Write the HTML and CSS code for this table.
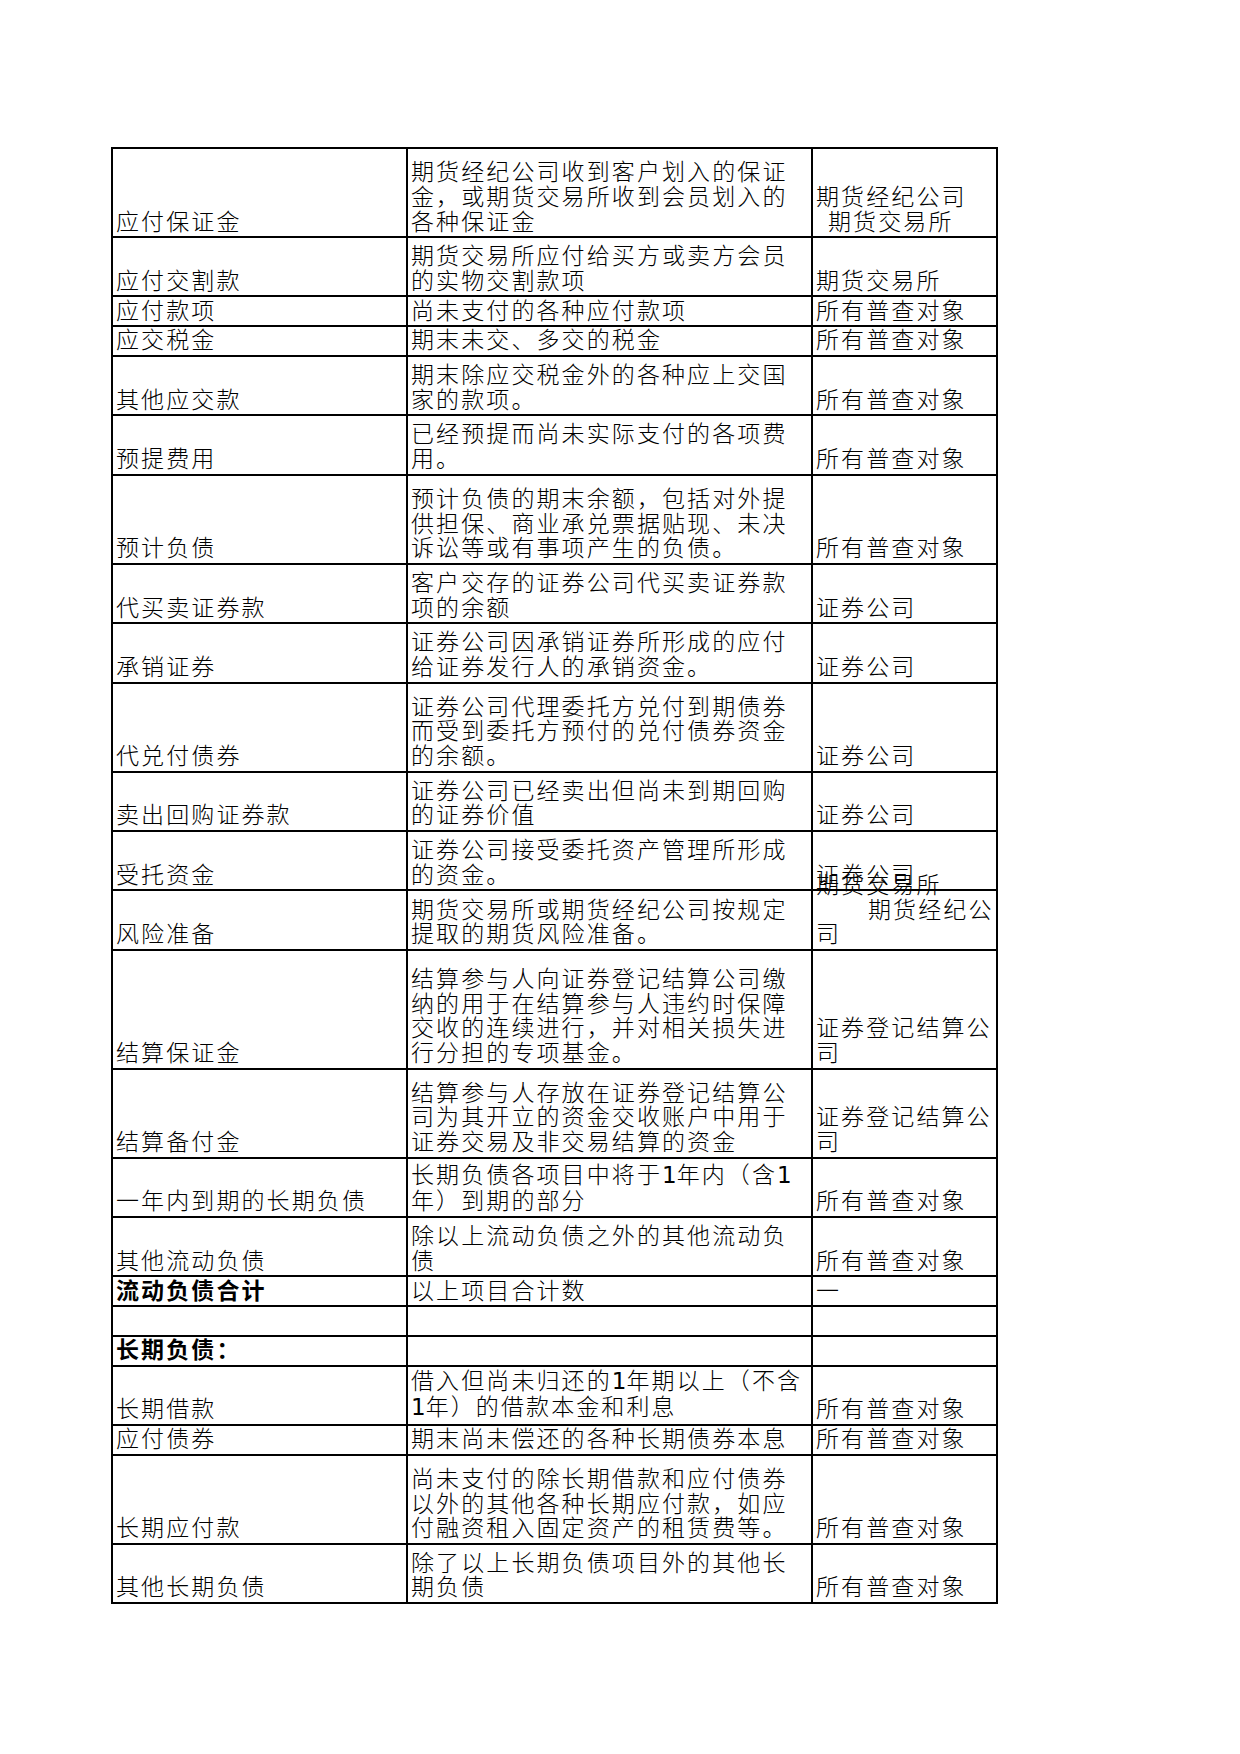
FILE: index.html
```html
<!DOCTYPE html>
<html lang="zh-CN">
<head>
<meta charset="utf-8">
<title>负债项目说明</title>
<link rel="stylesheet" href="styles.css">
</head>
<body>
<div class="sheet">
  <div class="row h3"><div class="c"><div class="t">应付保证金</div></div><div class="c"><div class="t">期货经纪公司收到客户划入的保证<br>金，或期货交易所收到会员划入的<br>各种保证金</div></div><div class="c"><div class="t">期货经纪公司<br><span class="i1">期货交易所</span></div></div></div>
  <div class="row h2"><div class="c"><div class="t">应付交割款</div></div><div class="c"><div class="t">期货交易所应付给买方或卖方会员<br>的实物交割款项</div></div><div class="c"><div class="t">期货交易所</div></div></div>
  <div class="row h1"><div class="c"><div class="t">应付款项</div></div><div class="c"><div class="t">尚未支付的各种应付款项</div></div><div class="c"><div class="t">所有普查对象</div></div></div>
  <div class="row h1"><div class="c"><div class="t">应交税金</div></div><div class="c"><div class="t">期末未交、多交的税金</div></div><div class="c"><div class="t">所有普查对象</div></div></div>
  <div class="row h2"><div class="c"><div class="t">其他应交款</div></div><div class="c"><div class="t">期末除应交税金外的各种应上交国<br>家的款项。</div></div><div class="c"><div class="t">所有普查对象</div></div></div>
  <div class="row h2"><div class="c"><div class="t">预提费用</div></div><div class="c"><div class="t">已经预提而尚未实际支付的各项费<br>用。</div></div><div class="c"><div class="t">所有普查对象</div></div></div>
  <div class="row h3"><div class="c"><div class="t">预计负债</div></div><div class="c"><div class="t">预计负债的期末余额，包括对外提<br>供担保、商业承兑票据贴现、未决<br>诉讼等或有事项产生的负债。</div></div><div class="c"><div class="t">所有普查对象</div></div></div>
  <div class="row h2"><div class="c"><div class="t">代买卖证券款</div></div><div class="c"><div class="t">客户交存的证券公司代买卖证券款<br>项的余额</div></div><div class="c"><div class="t">证券公司</div></div></div>
  <div class="row h2"><div class="c"><div class="t">承销证券</div></div><div class="c"><div class="t">证券公司因承销证券所形成的应付<br>给证券发行人的承销资金。</div></div><div class="c"><div class="t">证券公司</div></div></div>
  <div class="row h3"><div class="c"><div class="t">代兑付债券</div></div><div class="c"><div class="t">证券公司代理委托方兑付到期债券<br>而受到委托方预付的兑付债券资金<br>的余额。</div></div><div class="c"><div class="t">证券公司</div></div></div>
  <div class="row h2"><div class="c"><div class="t">卖出回购证券款</div></div><div class="c"><div class="t">证券公司已经卖出但尚未到期回购<br>的证券价值</div></div><div class="c"><div class="t">证券公司</div></div></div>
  <div class="row h2"><div class="c"><div class="t">受托资金</div></div><div class="c"><div class="t">证券公司接受委托资产管理所形成<br>的资金。</div></div><div class="c"><div class="t">证券公司</div></div></div>
  <div class="row h2"><div class="c"><div class="t">风险准备</div></div><div class="c"><div class="t">期货交易所或期货经纪公司按规定<br>提取的期货风险准备。</div></div><div class="c"><div class="t">期货交易所<br><span class="i2">期货经纪公</span><br>司</div></div></div>
  <div class="row h4"><div class="c"><div class="t">结算保证金</div></div><div class="c"><div class="t">结算参与人向证券登记结算公司缴<br>纳的用于在结算参与人违约时保障<br>交收的连续进行，并对相关损失进<br>行分担的专项基金。</div></div><div class="c"><div class="t">证券登记结算公<br>司</div></div></div>
  <div class="row h3"><div class="c"><div class="t">结算备付金</div></div><div class="c"><div class="t">结算参与人存放在证券登记结算公<br>司为其开立的资金交收账户中用于<br>证券交易及非交易结算的资金</div></div><div class="c"><div class="t">证券登记结算公<br>司</div></div></div>
  <div class="row h2"><div class="c"><div class="t">一年内到期的长期负债</div></div><div class="c"><div class="t">长期负债各项目中将于<span class="num">1</span>年内（含<span class="num">1</span><br>年）到期的部分</div></div><div class="c"><div class="t">所有普查对象</div></div></div>
  <div class="row h2"><div class="c"><div class="t">其他流动负债</div></div><div class="c"><div class="t">除以上流动负债之外的其他流动负<br>债</div></div><div class="c"><div class="t">所有普查对象</div></div></div>
  <div class="row h1"><div class="c"><div class="t b">流动负债合计</div></div><div class="c"><div class="t">以上项目合计数</div></div><div class="c"><div class="t">一</div></div></div>
  <div class="row h1"><div class="c"><div class="t"></div></div><div class="c"><div class="t"></div></div><div class="c"><div class="t"></div></div></div>
  <div class="row h1"><div class="c"><div class="t b">长期负债：</div></div><div class="c"><div class="t"></div></div><div class="c"><div class="t"></div></div></div>
  <div class="row h2"><div class="c"><div class="t">长期借款</div></div><div class="c"><div class="t">借入但尚未归还的<span class="num">1</span>年期以上（不含<br><span class="num">1</span>年）的借款本金和利息</div></div><div class="c"><div class="t">所有普查对象</div></div></div>
  <div class="row h1"><div class="c"><div class="t">应付债券</div></div><div class="c"><div class="t">期末尚未偿还的各种长期债券本息</div></div><div class="c"><div class="t">所有普查对象</div></div></div>
  <div class="row h3"><div class="c"><div class="t">长期应付款</div></div><div class="c"><div class="t">尚未支付的除长期借款和应付债券<br>以外的其他各种长期应付款，如应<br>付融资租入固定资产的租赁费等。</div></div><div class="c"><div class="t">所有普查对象</div></div></div>
  <div class="row h2"><div class="c"><div class="t">其他长期负债</div></div><div class="c"><div class="t">除了以上长期负债项目外的其他长<br>期负债</div></div><div class="c"><div class="t">所有普查对象</div></div></div>
</div>
</body>
</html>
```

FILE: styles.css
```css
html, body {
  margin: 0;
  padding: 0;
  background: #ffffff;
}

body {
  font-family: "Noto Sans CJK SC", "Noto Sans CJK JP", sans-serif;
  font-size: 23px;
  font-weight: 300;
  color: #000000;
}

.sheet {
  box-sizing: border-box;
  width: 887px;
  margin: 147px 0 0 111px;
  border-left: 2px solid #000;
  border-top: 2px solid #000;
}

.row {
  box-sizing: border-box;
  display: grid;
  grid-template-columns: 295px 405px 185px;
  border-bottom: 2px solid #000;
}

.h1 { height: 29.7px; }
.h2 { height: 59.4px; }
.h3 { height: 89.1px; }
.h4 { height: 118.8px; }

.c {
  box-sizing: border-box;
  display: flex;
  flex-direction: column;
  justify-content: flex-end;
  border-right: 2px solid #000;
  padding: 0 0 4px 3px;
  min-height: 0;
}

.t {
  line-height: 24.6px;
  letter-spacing: 2.1px;
  white-space: nowrap;
}

.b {
  font-weight: 700;
}

.num {
  font-family: "DejaVu Sans", sans-serif;
  font-weight: 400;
  letter-spacing: 0;
}

.i1 {
  padding-left: 12px;
}

.i2 {
  padding-left: 52px;
}
```
